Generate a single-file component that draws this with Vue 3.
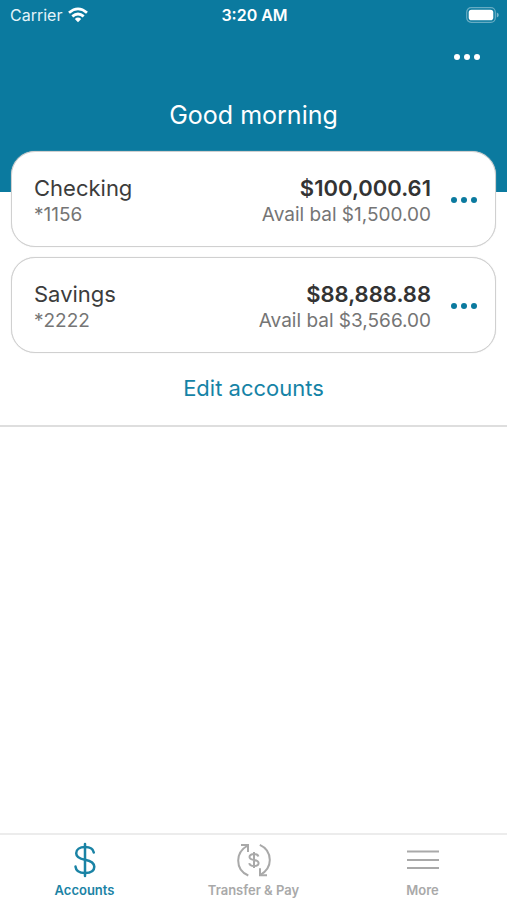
<script setup>
const accounts = [
  { name: 'Checking', mask: '*1156', balance: '$100,000.61', available: 'Avail bal $1,500.00' },
  { name: 'Savings', mask: '*2222', balance: '$88,888.88', available: 'Avail bal $3,566.00' },
]
</script>

<template>
  <div class="app">
    <header class="header">
      <div class="status">
        <div class="carrier">
          <span>Carrier</span>
          <svg class="wifi" viewBox="0 0 20 16" aria-hidden="true">
            <g fill="none" stroke="currentColor" stroke-width="2.8">
              <path d="M1 5.7Q10 -2 19 5.7" />
              <path d="M4.3 9.4Q10 4.5 15.7 9.4" />
            </g>
            <path d="M6.8 12Q10 9.2 13.2 12L10 15.3Z" fill="currentColor" />
          </svg>
        </div>
        <time class="clock">3:20 AM</time>
        <svg class="battery" viewBox="0 0 33 16" aria-hidden="true">
          <rect x="0.7" y="0.7" width="28.6" height="14.6" rx="4.5" fill="none" stroke="#fff" stroke-opacity="0.38" stroke-width="1.2" />
          <rect x="2.7" y="2.8" width="24.6" height="10.4" rx="2.8" fill="#fff" />
          <path d="M30.8 5.4Q32.8 6.3 32.8 8T30.8 10.6Z" fill="#fff" fill-opacity="0.45" />
        </svg>
      </div>
      <div class="toolbar">
        <button class="dots light" type="button" aria-label="Options"><i></i><i></i><i></i></button>
      </div>
      <h1 class="greeting">Good morning</h1>
    </header>

    <main class="main">
      <section class="accounts">
        <article v-for="account in accounts" :key="account.name" class="card">
          <div class="info">
            <h2 class="name">{{ account.name }}</h2>
            <span class="detail">{{ account.mask }}</span>
          </div>
          <div class="info amounts">
            <strong class="balance">{{ account.balance }}</strong>
            <span class="detail">{{ account.available }}</span>
          </div>
          <button class="dots" type="button" :aria-label="account.name + ' options'"><i></i><i></i><i></i></button>
        </article>
        <button class="edit" type="button">Edit accounts</button>
      </section>
    </main>

    <nav class="tabs">
      <a class="tab active" href="#accounts" aria-current="page">
        <svg class="icon" viewBox="0 0 36 36" aria-hidden="true">
          <g fill="none" stroke="currentColor" stroke-width="2.5" stroke-linecap="round">
            <path d="M18 2V34" />
            <path d="M26.8 10.5C26.2 6.8 22.8 5 18 5C12.7 5 9.2 7.4 9.2 11.2C9.2 15.3 12.6 16.7 18 17.7C23.8 18.8 27.3 20.5 27.3 24.8C27.3 28.8 23.8 31 18 31C12.2 31 8.9 28.5 8.5 24.6" />
          </g>
        </svg>
        <span>Accounts</span>
      </a>
      <a class="tab" href="#transfer">
        <svg class="icon" viewBox="0 0 36 36" aria-hidden="true">
          <g fill="none" stroke="currentColor" stroke-width="2">
            <path d="M12.3 33.5C5.6 30.7 2.2 25 2.2 18.5C2.2 12.5 5.2 7.2 11.7 3.5" />
            <path d="M5 3H12V10" />
            <path d="M23.8 2.8C30.5 5.8 33.8 11.4 33.8 18C33.8 24 30.6 29.3 24.3 33" />
            <path d="M31 33.3H24V26.3" />
            <path d="M18 10V26M22.4 14.4C22 12.8 20.4 12 18 12C15.3 12 13.5 13.1 13.5 15C13.5 17 15.3 17.5 18 18C20.8 18.5 22.6 19.2 22.6 21.1C22.6 23 20.8 24.1 18 24.1C15.2 24.1 13.6 23 13.3 21.2" />
          </g>
        </svg>
        <span>Transfer &amp; Pay</span>
      </a>
      <a class="tab" href="#more">
        <svg class="icon" viewBox="0 0 36 36" aria-hidden="true">
          <path d="M2 9.5H34M2 18H34M2 26H34" fill="none" stroke="currentColor" stroke-width="2" />
        </svg>
        <span>More</span>
      </a>
    </nav>
  </div>
</template>

<style>
body {
  margin: 0;
  background: #fff;
}
</style>

<style scoped>
.app {
  display: flex;
  flex-direction: column;
  min-height: 100vh;
  font-family: Inter, "Liberation Sans", sans-serif;
  color: #3c3c3c;
}
.header {
  box-sizing: border-box;
  padding-bottom: 61px;
  background: #0b7a9f;
  color: #fff;
}
.status {
  display: grid;
  grid-template-columns: 1fr auto 1fr;
  align-items: center;
  height: 30px;
  padding: 0 8px 0 10px;
  font-size: 16px;
}
.carrier {
  display: flex;
  align-items: center;
  gap: 6px;
  color: #e4f4fa;
}
.wifi {
  width: 20px;
  height: 16px;
  color: #fff;
}
.clock {
  font-size: 16px;
  font-weight: 600;
}
.battery {
  justify-self: end;
  width: 33px;
  height: 16px;
}
.toolbar {
  display: flex;
  justify-content: flex-end;
  height: 54px;
  padding-right: 18px;
  align-items: center;
}
.greeting {
  margin: 0;
  padding-top: 15px;
  font-size: 25px;
  line-height: 32px;
  font-weight: 400;
  text-align: center;
}
button {
  padding: 0;
  border: 0;
  background: none;
  font-family: inherit;
  cursor: pointer;
}
.dots {
  display: flex;
  align-items: center;
  justify-content: center;
  gap: 4px;
  width: 45px;
  height: 40px;
  color: #0b7a9f;
}
.dots.light {
  color: #fff;
}
.dots i {
  width: 6px;
  height: 6px;
  border-radius: 50%;
  background: currentColor;
}
.main {
  flex: 1;
}
.accounts {
  display: flex;
  flex-direction: column;
  gap: 10px;
  margin-top: -41px;
  padding: 0 11px 13px;
  border-bottom: 2px solid #dedede;
}
.card {
  box-sizing: border-box;
  display: flex;
  align-items: center;
  min-height: 96px;
  padding: 2px 9px 0 22px;
  border: 1px solid #d0d0d0;
  border-radius: 24px;
  background: #fff;
  box-shadow: 0 0 1px #cfcfcf;
}
.info {
  display: flex;
  flex-direction: column;
}
.amounts {
  margin-left: auto;
  margin-right: 10px;
  text-align: right;
}
.name,
.balance {
  margin: 0;
  font-size: 22px;
  line-height: 28px;
  font-weight: 400;
}
.balance {
  font-weight: 600;
  color: #333;
}
.detail {
  font-size: 19px;
  line-height: 25px;
  color: #757575;
}
.edit {
  align-self: center;
  height: 49px;
  font-size: 22px;
  color: #1583a6;
}
.tabs {
  display: grid;
  grid-template-columns: repeat(3, 1fr);
  border-top: 2px solid #ececec;
}
.tab {
  display: flex;
  flex-direction: column;
  align-items: center;
  gap: 4px;
  padding: 7px 0 2px;
  font-size: 13px;
  line-height: 16px;
  font-weight: 600;
  color: #a9a9a9;
  text-decoration: none;
}
.tab.active {
  color: #1a83a5;
}
.icon {
  width: 36px;
  height: 36px;
}
</style>
